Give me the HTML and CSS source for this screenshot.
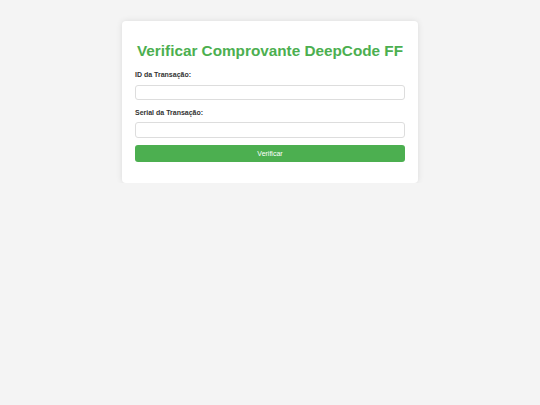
FILE: index.html
```html
<!DOCTYPE html>
<html lang="pt">
<head>
<meta charset="utf-8">
<title>Verificar Comprovante</title>
<link rel="stylesheet" href="styles.css">
</head>
<body>
<div class="card">
  <h1 class="title">Verificar Comprovante DeepCode FF</h1>
  <form class="form">
    <label class="label" for="tid">ID da Transação:</label>
    <input class="input" id="tid" type="text">
    <label class="label" for="serial">Serial da Transação:</label>
    <input class="input" id="serial" type="text">
    <button class="button" type="button">Verificar</button>
  </form>
</div>
</body>
</html>
```
FILE: styles.css
```css
html, body {
  margin: 0;
  padding: 0;
}
body {
  background: #f4f4f4;
  font-family: "Liberation Sans", Arial, sans-serif;
  padding-top: 21px;
}
.card {
  width: 296px;
  box-sizing: border-box;
  margin: 0 auto;
  background: #fff;
  border-radius: 4px;
  box-shadow: 0 0 6px rgba(0, 0, 0, 0.1);
  padding: 21px 13px 21px;
}
.title {
  margin: 0 0 11px;
  color: #4caf50;
  font-size: 15.3px;
  font-weight: bold;
  text-align: center;
  line-height: 17px;
  white-space: nowrap;
}
.form {
  display: flex;
  flex-direction: column;
}
.label {
  font-size: 7px;
  font-weight: bold;
  color: #333;
  line-height: 9px;
  margin-bottom: 5.5px;
}
.input {
  height: 15.5px;
  box-sizing: border-box;
  border: 1px solid #ddd;
  border-radius: 3px;
  margin: 0 0 7.5px;
  padding: 0 5px;
  font-size: 7px;
}
.button {
  height: 17.5px;
  border: none;
  border-radius: 3px;
  background: #4caf50;
  color: #fff;
  font-family: "Liberation Sans", Arial, sans-serif;
  font-size: 7px;
  padding: 0;
  margin-top: -0.5px;
}
```
